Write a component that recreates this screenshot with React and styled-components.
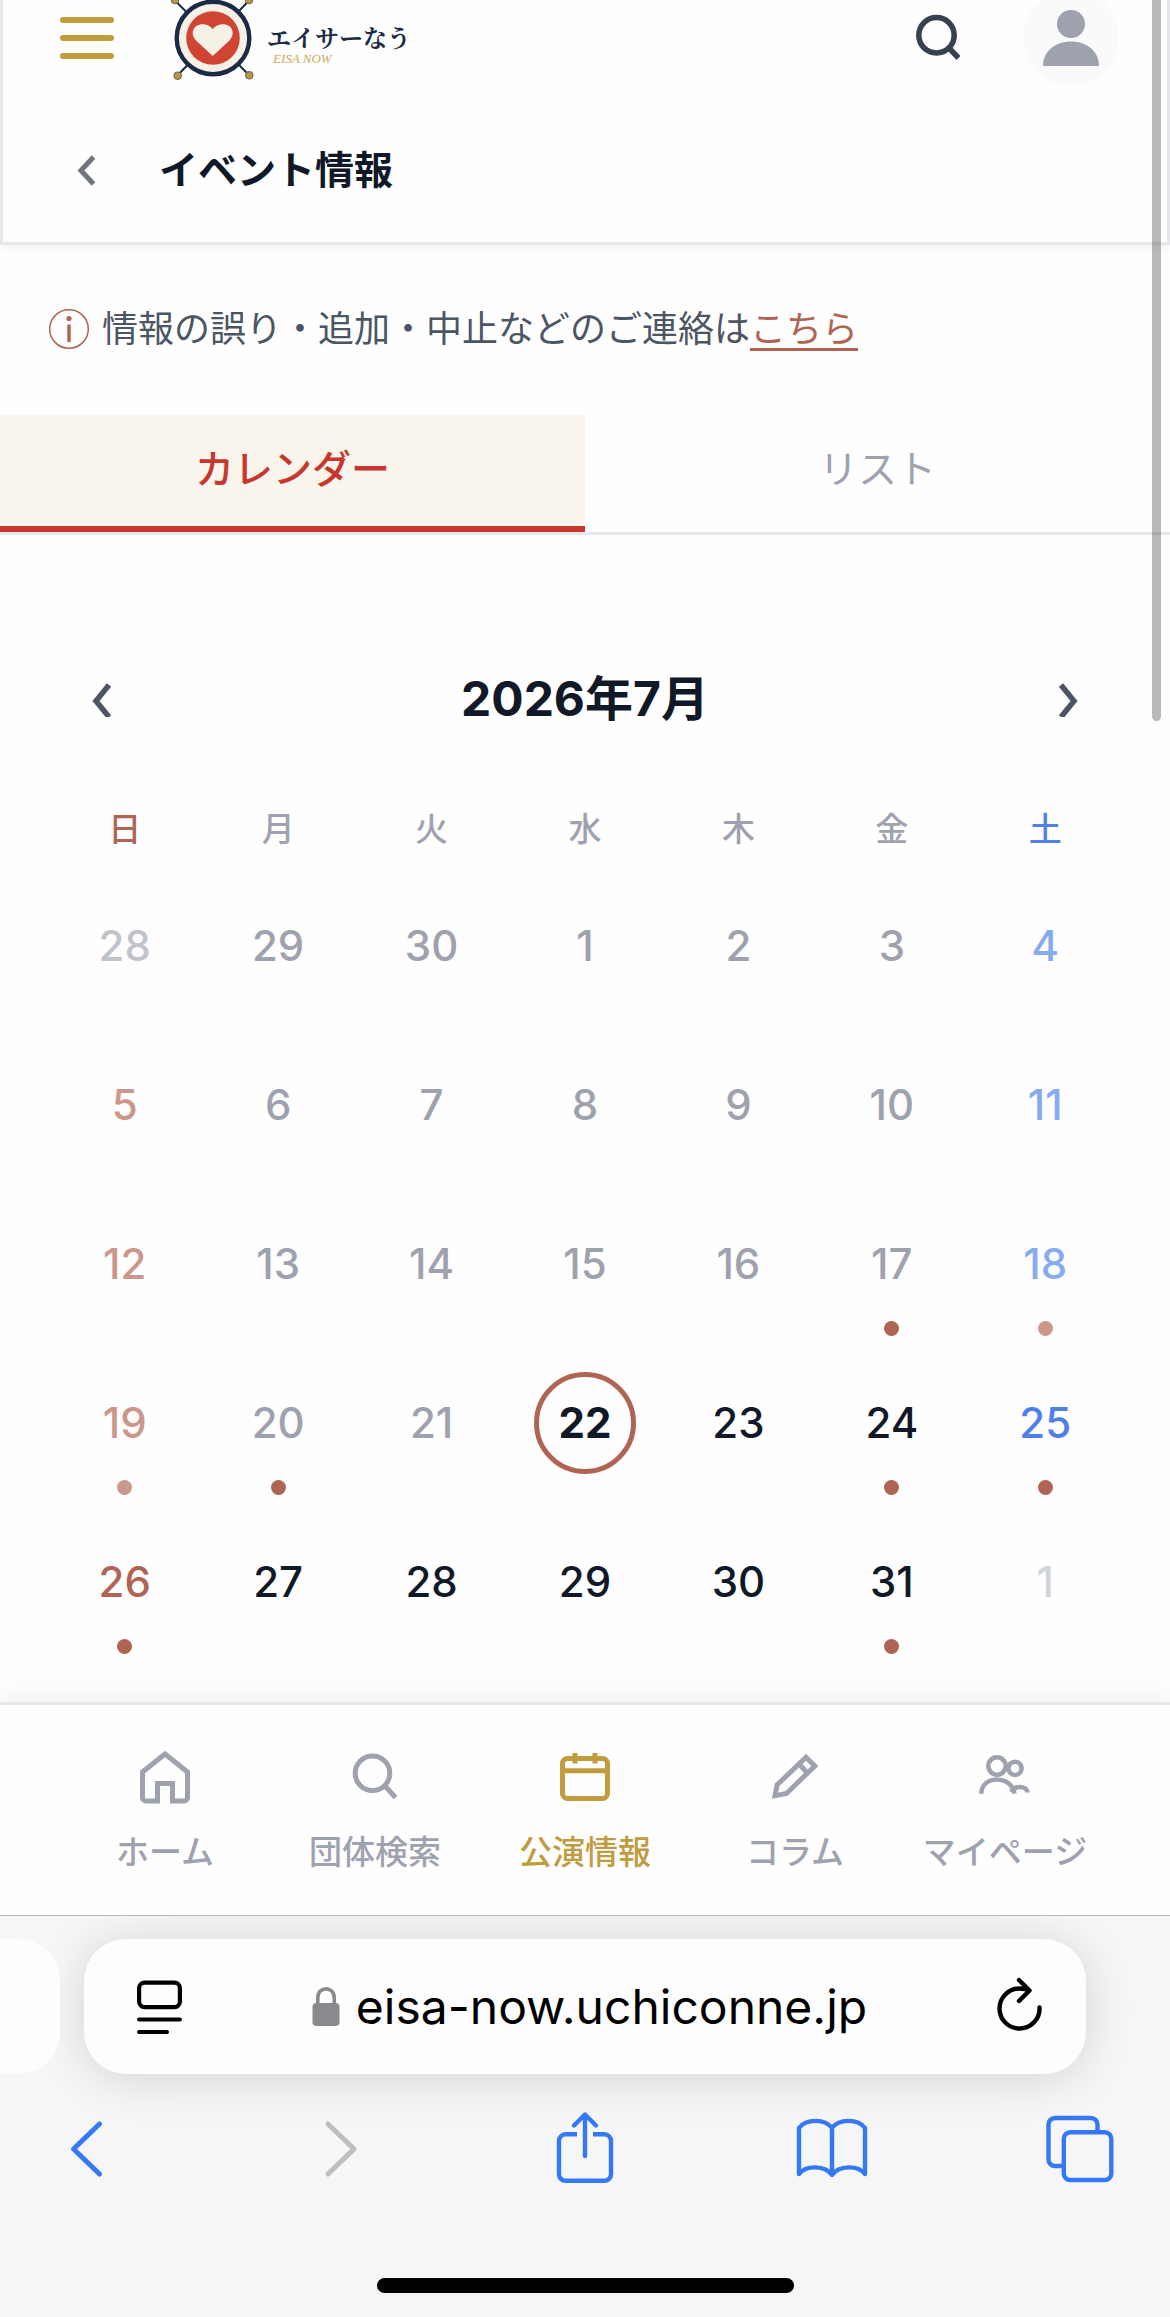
import React, { useState } from 'react';
import styled, { createGlobalStyle } from 'styled-components';

const colors = {
  ink: '#111827',
  slate: '#4b5563',
  muted: '#9ea2ae',
  line: '#e5e7eb',
  gold: '#c09c3f',
  brick: '#b06454',
  red: '#c8372d',
  blue: '#4f7fe8',
  safari: '#3478f6',
};

const GlobalStyle = createGlobalStyle`
  * {
    box-sizing: border-box;
  }

  body {
    background: #fefefe;
    color: ${colors.ink};
    font-family: Inter, 'Noto Sans CJK JP', sans-serif;
    margin: 0;
    overflow-x: hidden;
  }

  button {
    background: none;
    border: 0;
    color: inherit;
    cursor: pointer;
    font: inherit;
    padding: 0;
  }

  svg {
    display: block;
    flex: none;
  }
`;

const Page = styled.div`
  overflow: hidden;
  position: relative;
`;

const ScrollThumb = styled.div`
  background: rgba(0, 0, 0, 0.27);
  border-radius: 0 0 5px 5px;
  height: 721px;
  position: absolute;
  right: 9px;
  top: 0;
  width: 9px;
  z-index: 2;
`;

const Header = styled.header`
  border: 3px solid ${colors.line};
  border-top: 0;
  box-shadow: 0 2px 9px rgba(0, 0, 0, 0.06);
`;

const TopBar = styled.div`
  align-items: center;
  display: flex;
  height: 96px;
  margin-top: -10px;
  padding: 0 48px 0 57px;
`;

const MenuButton = styled.button`
  display: flex;
  flex-direction: column;
  gap: 12px;
  margin-right: 54px;
  width: 54px;
`;

const MenuBar = styled.span`
  background: ${colors.gold};
  border-radius: 3px;
  height: 6px;
`;

const Brand = styled.a`
  align-items: center;
  color: #1b2b45;
  display: flex;
  flex: 1;
  gap: 9px;
  text-decoration: none;
`;

const BrandText = styled.span`
  display: flex;
  flex-direction: column;
  padding-top: 18px;
`;

const BrandName = styled.span`
  font-family: 'Noto Serif CJK JP', 'Noto Sans CJK JP', serif;
  font-size: 24px;
  font-weight: 700;
  line-height: 24px;
`;

const BrandSub = styled.span`
  color: #c9a75a;
  font-family: 'Liberation Serif', serif;
  font-size: 13px;
  font-style: italic;
  line-height: 20px;
  padding-left: 6px;
`;

const SearchButton = styled.button`
  color: #374151;
  margin-right: 60px;
`;

const Avatar = styled.button`
  background: #fafafa;
  border-radius: 50%;
  color: ${colors.muted};
`;

const TitleBar = styled.div`
  align-items: center;
  display: flex;
  gap: 51px;
  padding: 48px 57px 36px 69px;
`;

const BackButton = styled.button`
  color: #71757f;
`;

const Title = styled.h1`
  font-size: 39px;
  font-weight: 700;
  line-height: 72px;
  margin: 0;
`;

const Notice = styled.p`
  align-items: center;
  color: ${colors.slate};
  display: flex;
  font-size: 36px;
  gap: 12px;
  line-height: 72px;
  margin: 0;
  padding: 48px 48px 50px;
`;

const NoticeLink = styled.a`
  color: ${colors.brick};
  text-decoration: underline;
  text-decoration-thickness: 3px;
  text-underline-offset: 6px;
`;

const Tabs = styled.div`
  border-bottom: 3px solid ${colors.line};
  display: flex;
`;

const Tab = styled.button`
  background: ${props => (props.$active ? '#f9f5ec' : 'transparent')};
  border-bottom: 6px solid ${props => (props.$active ? colors.red : 'transparent')};
  color: ${props => (props.$active ? colors.red : colors.muted)};
  flex: 1;
  font-size: 39px;
  font-weight: ${props => (props.$active ? 500 : 400)};
  height: 117px;
  line-height: 60px;
  padding-bottom: 4px;
`;

const Calendar = styled.section`
  padding: 128px 48px 12px;
`;

const MonthBar = styled.div`
  align-items: center;
  display: flex;
  justify-content: space-between;
  margin-bottom: 70px;
  padding: 0 36px;
`;

const MonthButton = styled.button`
  color: ${colors.slate};
`;

const MonthTitle = styled.h2`
  font-size: 48px;
  font-weight: 700;
  line-height: 72px;
  margin: 0;
`;

const Month = styled.table`
  border-collapse: collapse;
  table-layout: fixed;
  width: 100%;
`;

const Weekday = styled.th`
  color: ${props => props.$color};
  font-size: 33px;
  font-weight: 500;
  height: 90px;
  line-height: 48px;
  padding: 0;
  vertical-align: top;
`;

const DayCell = styled.td`
  height: 159px;
  padding: 0;
  vertical-align: top;
`;

const DayButton = styled.button`
  align-items: center;
  color: ${props => props.$color};
  display: flex;
  flex-direction: column;
  font-size: 42px;
  font-weight: ${props => (props.$today ? 700 : 500)};
  gap: 6px;
  width: 100%;
`;

const DayNumber = styled.span`
  border: 5px solid ${props => (props.$today ? colors.brick : 'transparent')};
  border-radius: 50%;
  height: 102px;
  line-height: 92px;
  width: 102px;
`;

const Dot = styled.span`
  background: ${props => (props.$faded ? '#cc988c' : colors.brick)};
  border-radius: 50%;
  height: 15px;
  width: 15px;
`;

const BottomNav = styled.nav`
  background: #fefefe;
  border-top: 3px solid ${colors.line};
  box-shadow: 0 -6px 24px rgba(0, 0, 0, 0.06);
  display: flex;
  padding: 36px 60px 39px;
  position: relative;
`;

const NavItem = styled.a`
  align-items: center;
  color: ${props => (props.$active ? colors.gold : colors.muted)};
  display: flex;
  flex: 1;
  flex-direction: column;
  font-size: 33px;
  font-weight: 500;
  gap: 15px;
  line-height: 48px;
  text-decoration: none;
  white-space: nowrap;
`;

const Browser = styled.footer`
  background: #f6f6f7;
  border-top: 1px solid #b9bcbd;
  overflow: hidden;
  padding: 23px 0 24px;
  position: relative;
`;

const AddressRow = styled.div`
  display: flex;
  gap: 24px;
  padding-right: 84px;
`;

const Pill = styled.div`
  background: #fdfdfe;
  border-radius: 42px;
  box-shadow: 0 4px 48px rgba(0, 0, 0, 0.14);
  height: 135px;
`;

const PreviousPill = styled(Pill)`
  border-bottom-left-radius: 0;
  border-top-left-radius: 0;
  box-shadow: none;
  position: relative;
  width: 60px;
`;

const AddressPill = styled(Pill)`
  align-items: center;
  color: #000;
  display: flex;
  flex: 1;
  justify-content: space-between;
  padding: 0 39px 0 48px;
`;

const Address = styled.button`
  align-items: center;
  display: flex;
  font-size: 48px;
  gap: 16px;
  line-height: 60px;
`;

const Toolbar = styled.div`
  display: flex;
  justify-content: space-between;
  padding: 36px 52px 92px 48px;
`;

const ToolButton = styled.button`
  color: ${colors.safari};

  &:disabled {
    color: #bebebe;
  }
`;

const HomeIndicator = styled.div`
  background: #000;
  border-radius: 8px;
  height: 15px;
  margin: 0 auto;
  width: 417px;
`;

function Icon({ size = 72, width = 5, children, ...rest }) {
  return (
    <svg
      width={size}
      height={size}
      viewBox={`0 0 ${size} ${size}`}
      fill="none"
      stroke="currentColor"
      strokeWidth={width}
      aria-hidden="true"
      {...rest}
    >
      {children}
    </svg>
  );
}

function Logo() {
  return (
    <svg width="90" height="96" viewBox="0 0 90 96" aria-hidden="true">
      <path d="M7 10.500L82 86M81 10.500L9 86" stroke="#1b2b45" strokeWidth="2" />
      <g fill="#b8974a" stroke="#6b5f45" strokeWidth="1">
        <circle cx="7" cy="10" r="3.800" />
        <circle cx="81" cy="10" r="3.800" />
        <circle cx="9.700" cy="85.700" r="3.800" />
        <circle cx="81.300" cy="85.300" r="3.800" />
      </g>
      <circle cx="45" cy="48" r="36.300" fill="#f6f1e6" stroke="#1b2b45" strokeWidth="4.400" />
      <circle cx="45" cy="48" r="26.800" fill="#cf4433" />
      <path
        d="M44.700 66L28 50.500C21.500 43.500 25.500 34.300 34.500 34.300C39 34.300 43 36.500 44.700 39.500C46.500 36.500 50.500 34.300 55 34.300C64 34.300 68 43.500 61.500 50.500Z"
        fill="#f6f1e6"
      />
    </svg>
  );
}

function HomeIcon() {
  return (
    <Icon>
      <path d="M36 13L13.500 31V56.500A3.500 3.500 0 0 0 17 60H28.500V42.500H43.500V60H55A3.500 3.500 0 0 0 58.500 56.500V31Z" />
    </Icon>
  );
}

function GroupSearchIcon() {
  return (
    <Icon>
      <circle cx="33.500" cy="32.300" r="17.300" />
      <path d="M45.500 44.500L56.500 56.500" />
    </Icon>
  );
}

function CalendarIcon() {
  return (
    <Icon>
      <rect x="13.500" y="17.500" width="45" height="40" rx="5" />
      <path d="M13.500 29.700H58.500M26 12V22.500M46 12V22.500" />
    </Icon>
  );
}

function PencilIcon() {
  return (
    <Icon>
      <path d="M47 16.300L55.800 25L27.500 52.500L16 54.600L18.200 43.800Z" />
      <path d="M39.500 22.500L48.500 32" />
    </Icon>
  );
}

function PeopleIcon() {
  return (
    <Icon width={4.5}>
      <circle cx="28" cy="25" r="8.700" />
      <circle cx="46" cy="27.300" r="6.600" />
      <path d="M12.300 52.700C12.300 44 19 38.500 28 38.500S44 44 45.500 52.700M42 51C44 47.500 47 46 50.500 46C55 46 58.300 48 58.300 51.500" />
    </Icon>
  );
}

const weekdays = ['日', '月', '火', '水', '木', '金', '土'];

const weeks = [
  [28, 29, 30, 1, 2, 3, 4],
  [5, 6, 7, 8, 9, 10, 11],
  [12, 13, 14, 15, 16, 17, 18],
  [19, 20, 21, 22, 23, 24, 25],
  [26, 27, 28, 29, 30, 31, 1],
];

const today = 22;
const eventDays = [17, 18, 19, 20, 24, 25, 26, 31];
const fadedEventDays = [18, 19];

const navItems = [
  { label: 'ホーム', icon: HomeIcon },
  { label: '団体検索', icon: GroupSearchIcon },
  { label: '公演情報', icon: CalendarIcon, active: true },
  { label: 'コラム', icon: PencilIcon },
  { label: 'マイページ', icon: PeopleIcon },
];

function weekdayColor(column) {
  if (column === 0) return colors.brick;
  if (column === 6) return colors.blue;
  return colors.muted;
}

function dayColor(day, week, column) {
  if (week === 0 && column === 0) return '#c1c3ca';
  if (week === 4 && column === 6) return '#d1d4da';

  const isPast = week < 3 || (week === 3 && day < today);
  if (column === 0) return isPast ? '#cc978a' : colors.brick;
  if (column === 6) return isPast ? '#86abf1' : colors.blue;
  return isPast ? colors.muted : colors.ink;
}

function Day({ day, week, column }) {
  const inMonth = !(week === 0 && day > 20) && !(week === 4 && day < 10);
  const isToday = inMonth && day === today;

  return (
    <DayCell>
      <DayButton $color={dayColor(day, week, column)} $today={isToday}>
        <DayNumber $today={isToday}>{day}</DayNumber>
        {inMonth && eventDays.includes(day) && (
          <Dot $faded={fadedEventDays.includes(day)} />
        )}
      </DayButton>
    </DayCell>
  );
}

export default function App() {
  const [tab, setTab] = useState('calendar');

  return (
    <Page>
      <GlobalStyle />
      <ScrollThumb />
      <Header>
        <TopBar>
          <MenuButton aria-label="メニュー">
            <MenuBar />
            <MenuBar />
            <MenuBar />
          </MenuButton>
          <Brand href="#home">
            <Logo />
            <BrandText>
              <BrandName>エイサーなう</BrandName>
              <BrandSub>EISA NOW</BrandSub>
            </BrandText>
          </Brand>
          <SearchButton aria-label="検索">
            <Icon size={48} width={5.5}>
              <circle cx="21.500" cy="21.300" r="17.700" />
              <path d="M33.500 33.500L43.500 44" />
            </Icon>
          </SearchButton>
          <Avatar aria-label="アカウント">
            <Icon size={96} fill="currentColor" stroke="none">
              <circle cx="48" cy="34" r="14" />
              <path d="M20 76C20 61.500 32 51.500 48 51.500S76 61.500 76 76Z" />
            </Icon>
          </Avatar>
        </TopBar>
        <TitleBar>
          <BackButton aria-label="戻る">
            <Icon size={36}>
              <path d="M21.500 5L9 18.500L21.500 32" />
            </Icon>
          </BackButton>
          <Title>イベント情報</Title>
        </TitleBar>
      </Header>

      <Notice>
        <Icon size={42} width={1.5} color={colors.brick}>
          <circle cx="21" cy="21" r="19.300" />
          <path d="M21 16.500V34" strokeWidth="3.500" />
          <circle cx="21" cy="10.500" r="2.600" fill="currentColor" stroke="none" />
        </Icon>
        <span>
          情報の誤り・追加・中止などのご連絡は
          <NoticeLink href="#contact">こちら</NoticeLink>
        </span>
      </Notice>

      <Tabs role="tablist">
        <Tab
          role="tab"
          aria-selected={tab === 'calendar'}
          $active={tab === 'calendar'}
          onClick={() => setTab('calendar')}
        >
          カレンダー
        </Tab>
        <Tab
          role="tab"
          aria-selected={tab === 'list'}
          $active={tab === 'list'}
          onClick={() => setTab('list')}
        >
          リスト
        </Tab>
      </Tabs>

      <Calendar>
        <MonthBar>
          <MonthButton aria-label="前の月">
            <Icon size={36} width={5.5}>
              <path d="M25 4L12 20L25 36" />
            </Icon>
          </MonthButton>
          <MonthTitle>2026年7月</MonthTitle>
          <MonthButton aria-label="次の月">
            <Icon size={36} width={5.5}>
              <path d="M11 4L24 20L11 36" />
            </Icon>
          </MonthButton>
        </MonthBar>
        <Month>
          <thead>
            <tr>
              {weekdays.map((name, column) => (
                <Weekday key={name} scope="col" $color={weekdayColor(column)}>
                  {name}
                </Weekday>
              ))}
            </tr>
          </thead>
          <tbody>
            {weeks.map((days, week) => (
              <tr key={week}>
                {days.map((day, column) => (
                  <Day key={column} day={day} week={week} column={column} />
                ))}
              </tr>
            ))}
          </tbody>
        </Month>
      </Calendar>

      <BottomNav>
        {navItems.map(({ label, icon: NavIcon, active }) => (
          <NavItem key={label} href="#nav" $active={active}>
            <NavIcon />
            {label}
          </NavItem>
        ))}
      </BottomNav>

      <Browser>
        <AddressRow>
          <PreviousPill />
          <AddressPill>
            <button aria-label="ページメニュー">
              <Icon size={54} width={4.2} strokeLinecap="round">
                <rect x="7.100" y="2.600" width="40.800" height="24.500" rx="5.500" />
                <path d="M7.100 39.500H47.900M7.100 52H34.900" />
              </Icon>
            </button>
            <Address>
              <svg width="28" height="40" viewBox="0 0 28 40" aria-hidden="true">
                <path d="M5.800 18V10.500C5.800 -1 22.200 -1 22.200 10.500V18" fill="none" stroke="#8a8a8e" strokeWidth="3.600" />
                <rect x="0.500" y="16" width="27" height="23" rx="4" fill="#8a8a8e" />
              </svg>
              eisa-now.uchiconne.jp
            </Address>
            <button aria-label="再読み込み">
              <Icon
                size={54}
                width={4.4}
                strokeLinecap="round"
                strokeLinejoin="round"
                overflow="visible"
              >
                <path d="M46.500 27.500A20 20 0 1 1 26.500 8.500Q32 8.500 36.500 10.500M26 0L36.500 10.500L26 21" />
              </Icon>
            </button>
          </AddressPill>
        </AddressRow>
        <Toolbar>
          <ToolButton aria-label="戻る">
            <Icon size={76} strokeLinecap="round" strokeLinejoin="round">
              <path d="M51.500 14L25.500 39L51.500 64" />
            </Icon>
          </ToolButton>
          <ToolButton aria-label="進む" disabled>
            <Icon size={76} strokeLinecap="round" strokeLinejoin="round">
              <path d="M31 14L57 39L31 64" />
            </Icon>
          </ToolButton>
          <ToolButton aria-label="共有">
            <Icon size={76} width={4.4} strokeLinejoin="round">
              <path d="M32 24.300H20.500A6.500 6.500 0 0 0 14 30.800V64.300A6.500 6.500 0 0 0 20.500 70.800H59.500A6.500 6.500 0 0 0 66 64.300V30.800A6.500 6.500 0 0 0 59.500 24.300H48" />
              <path d="M40 46V4.500M29 15.500L40 4.500L51 15.500" strokeLinecap="round" />
            </Icon>
          </ToolButton>
          <ToolButton aria-label="ブックマーク">
            <Icon size={76} width={4.4} strokeLinejoin="round">
              <path d="M38 18C31 8.500 12 8.500 5 18V64C12 55 31 55 38 65C45 55 64 55 71 64V18C64 8.500 45 8.500 38 18ZM38 18V65" />
            </Icon>
          </ToolButton>
          <ToolButton aria-label="タブ">
            <Icon size={76} width={4.4}>
              <path d="M55.500 21V14.500A6.500 6.500 0 0 0 49 8H13A6.500 6.500 0 0 0 6.500 14.500V49.500A6.500 6.500 0 0 0 13 56H20.500" />
              <rect x="21.800" y="22.200" width="47.500" height="47.800" rx="6.500" />
            </Icon>
          </ToolButton>
        </Toolbar>
        <HomeIndicator />
      </Browser>
    </Page>
  );
}
